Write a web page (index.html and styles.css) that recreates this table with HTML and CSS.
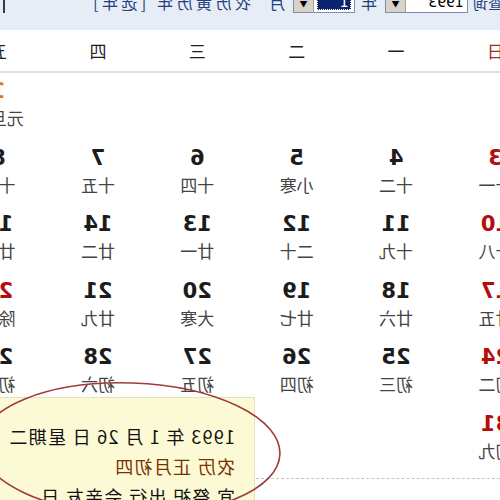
FILE: index.html
```html
<!DOCTYPE html>
<html lang="zh-CN">
<head>
<meta charset="utf-8">
<title>万年历</title>
<link rel="stylesheet" href="styles.css">
</head>
<body>
<div class="page">
  <div class="topbar">
    <div class="bar-row">
      <span class="cut">查询</span>
      <span class="select s-year"><span class="sel-val">1993</span><span class="sel-btn">▼</span></span>
      <span class="lbl">年</span>
      <span class="select s-month"><span class="sel-val"><span class="sel-active">1</span></span><span class="sel-btn">▼</span></span>
      <span class="lbl">月</span>
      <span class="link">农历黄历年 [选年]</span>
      <span class="pipe"></span>
    </div>
  </div>

  <div class="weekhead">
    <span class="sun">日</span><span>一</span><span>二</span><span>三</span><span>四</span><span>五</span><span>六</span>
  </div>

  <div class="grid">
    <div class="cell"></div><div class="cell"></div><div class="cell"></div><div class="cell"></div><div class="cell"></div>
    <div class="cell"><b class="num holiday">1</b><span class="lunar">元旦节</span></div>
    <div class="cell"><b class="num">2</b><span class="lunar">初十</span></div>

    <div class="cell"><b class="num red">3</b><span class="lunar">十一</span></div>
    <div class="cell"><b class="num">4</b><span class="lunar">十二</span></div>
    <div class="cell"><b class="num">5</b><span class="lunar">小寒</span></div>
    <div class="cell"><b class="num">6</b><span class="lunar">十四</span></div>
    <div class="cell"><b class="num">7</b><span class="lunar">十五</span></div>
    <div class="cell"><b class="num">8</b><span class="lunar">十六</span></div>
    <div class="cell"><b class="num">9</b><span class="lunar">十七</span></div>

    <div class="cell"><b class="num red">10</b><span class="lunar">十八</span></div>
    <div class="cell"><b class="num">11</b><span class="lunar">十九</span></div>
    <div class="cell"><b class="num">12</b><span class="lunar">二十</span></div>
    <div class="cell"><b class="num">13</b><span class="lunar">廿一</span></div>
    <div class="cell"><b class="num">14</b><span class="lunar">廿二</span></div>
    <div class="cell"><b class="num">15</b><span class="lunar">廿三</span></div>
    <div class="cell"><b class="num">16</b><span class="lunar">廿四</span></div>

    <div class="cell"><b class="num red">17</b><span class="lunar">廿五</span></div>
    <div class="cell"><b class="num">18</b><span class="lunar">廿六</span></div>
    <div class="cell"><b class="num">19</b><span class="lunar">廿七</span></div>
    <div class="cell"><b class="num">20</b><span class="lunar">大寒</span></div>
    <div class="cell"><b class="num">21</b><span class="lunar">廿九</span></div>
    <div class="cell"><b class="num red">22</b><span class="lunar">除夕</span></div>
    <div class="cell"><b class="num red">23</b><span class="lunar">春节</span></div>

    <div class="cell"><b class="num red">24</b><span class="lunar">初二</span></div>
    <div class="cell"><b class="num">25</b><span class="lunar">初三</span></div>
    <div class="cell"><b class="num">26</b><span class="lunar">初四</span></div>
    <div class="cell"><b class="num">27</b><span class="lunar">初五</span></div>
    <div class="cell"><b class="num">28</b><span class="lunar">初六</span></div>
    <div class="cell"><b class="num">29</b><span class="lunar">初七</span></div>
    <div class="cell"><b class="num">30</b><span class="lunar">初八</span></div>

    <div class="cell"><b class="num red">31</b><span class="lunar">初九</span></div>
  </div>

  <div class="tip">
    <div class="tip-line">1993 年 1 月 26 日 星期二</div>
    <div class="tip-line lunar-line">农历 正月初四</div>
    <div class="tip-line">宜 祭祀 出行 会亲友 日</div>
  </div>

  <svg class="ring" width="500" height="500" viewBox="0 0 500 500">
    <ellipse cx="370" cy="449" rx="150" ry="66" fill="none" stroke="#a03a3c" stroke-width="1.6" transform="rotate(-2 370 449)"/>
  </svg>
</div>
</body>
</html>
```

FILE: styles.css
```css
html, body {
  margin: 0;
  padding: 0;
  background: #ffffff;
}

.page {
  position: relative;
  width: 500px;
  height: 500px;
  overflow: hidden;
  background: #ffffff;
  transform: scaleX(-1);
  font-family: "Noto Sans CJK SC", "DejaVu Sans", sans-serif;
}

/* top toolbar */
.topbar {
  height: 30px;
  background: #e6edf7;
  overflow: hidden;
}

.bar-row {
  display: flex;
  align-items: center;
  height: 22px;
  margin-top: -9px;
  font-size: 15px;
  color: #23407c;
  white-space: nowrap;
}

.cut {
  margin-left: -3px;
}

.select {
  display: flex;
  height: 21px;
  border: 1px solid #7f8fa8;
  background: #ffffff;
  box-sizing: border-box;
}

.s-year {
  margin-left: 5px;
  width: 83px;
}

.s-month {
  margin-left: 6px;
  width: 62px;
}

.sel-val {
  flex: 1;
  display: flex;
  align-items: center;
  padding: 0 3px;
  font-family: "DejaVu Sans", sans-serif;
  font-size: 14px;
  color: #000;
}

.sel-active {
  display: block;
  width: 100%;
  height: 16px;
  line-height: 16px;
  background: #0a2470;
  color: #fff;
  outline: 1px dotted #ffffff;
  outline-offset: -1px;
  text-align: left;
  padding-left: 2px;
}

.sel-btn {
  width: 20px;
  background: #d8d4cc;
  border-left: 1px solid #a8a49c;
  font-size: 8px;
  color: #000;
  display: flex;
  align-items: flex-end;
  justify-content: center;
  padding-bottom: 3px;
  box-sizing: border-box;
}

.lbl {
  margin-left: 8px;
  font-size: 16px;
}

.link {
  margin-left: 18px;
  font-size: 16px;
  letter-spacing: 3.5px;
}

.pipe {
  margin-left: auto;
  margin-right: 3px;
  width: 2px;
  height: 22px;
  background: #3a3a3a;
}

/* weekday header */
.weekhead {
  display: grid;
  grid-template-columns: repeat(7, 99.4px);
  margin-left: -45.2px;
  height: 41px;
  align-items: center;
  border-bottom: 2px solid #dedede;
  font-size: 17px;
  color: #1e1e1e;
}

.weekhead span {
  text-align: center;
}

.weekhead .sun {
  color: #a52a2a;
}

/* calendar grid */
.grid {
  display: grid;
  grid-template-columns: repeat(7, 99.4px);
  grid-auto-rows: 66.6px;
  margin-left: -45.2px;
  padding-bottom: 5px;
  border-bottom: 1px dashed #c4c4c4;
}

.cell {
  display: flex;
  flex-direction: column;
  align-items: center;
  padding-top: 6px;
}

.num {
  font-family: "DejaVu Sans", sans-serif;
  font-weight: bold;
  font-size: 21px;
  line-height: 24px;
  color: #1c1c1c;
  margin-bottom: 4px;
}

.num.red {
  color: #b50d0d;
}

.num.holiday {
  color: #e07a16;
}

.lunar {
  font-size: 17px;
  line-height: 22px;
  color: #444444;
  white-space: nowrap;
}

/* tooltip */
.tip {
  position: absolute;
  left: 245px;
  top: 397px;
  width: 280px;
  height: 120px;
  background: #fcfad4;
  border: 1px solid #e6e2c0;
  padding: 23px 0 0 19px;
  box-sizing: border-box;
}

.tip-line {
  font-size: 18px;
  line-height: 30px;
  letter-spacing: 1.3px;
  color: #111111;
  white-space: nowrap;
}

.tip-line.lunar-line {
  color: #7a3000;
}

.ring {
  position: absolute;
  left: 0;
  top: 0;
  pointer-events: none;
}
```
